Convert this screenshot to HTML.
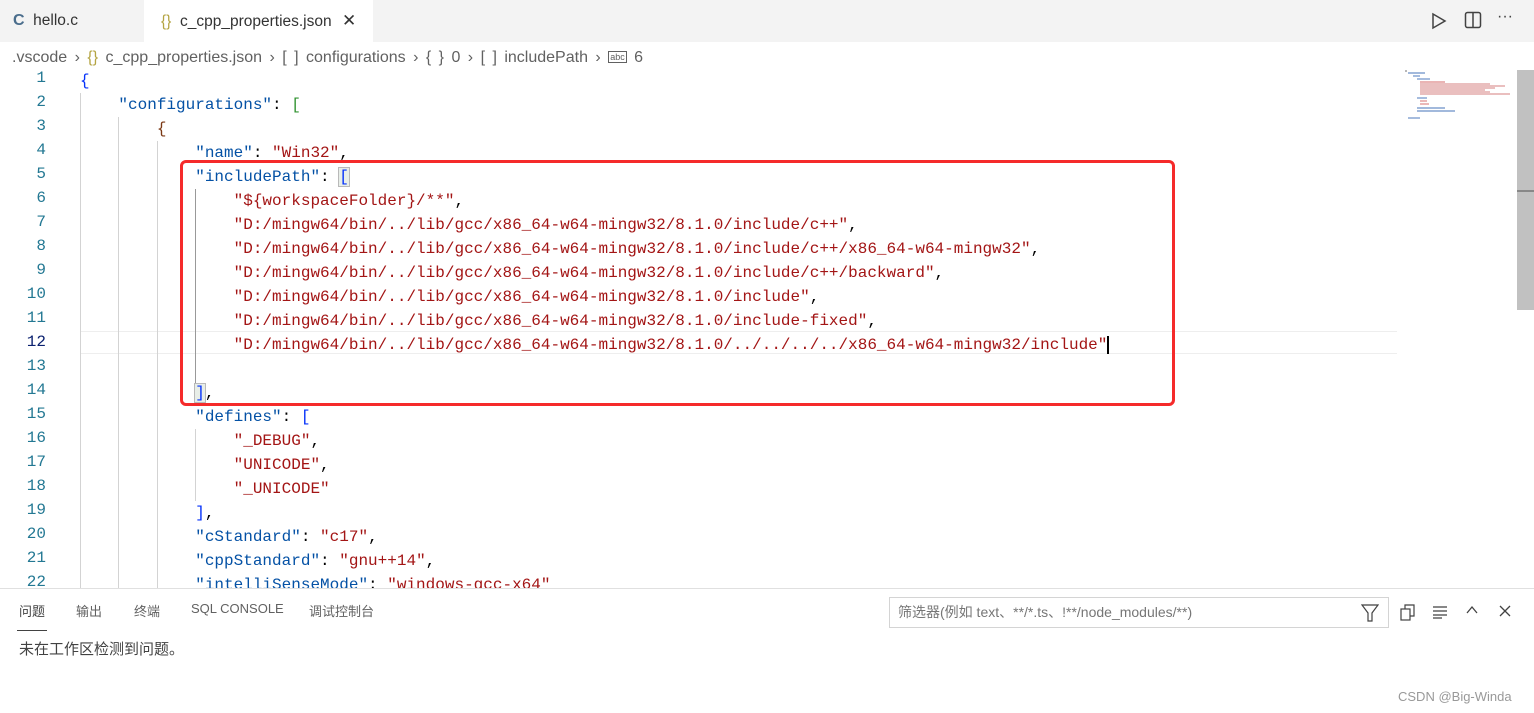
<!DOCTYPE html>
<html><head><meta charset="utf-8"><style>
*{margin:0;padding:0;box-sizing:border-box}
body{width:1534px;height:713px;overflow:hidden;background:#fff;position:relative;font-family:"Liberation Sans","Noto Sans CJK SC",sans-serif;}
.tabs{position:absolute;left:0;top:0;width:1534px;height:42px;background:#f3f3f3}
.tab{position:absolute;top:0;height:42px;font-size:15.5px;color:#333;line-height:42px;white-space:nowrap}
.bc{position:absolute;top:46px;left:12px;font-size:16px;color:#616161;white-space:nowrap;line-height:22px;word-spacing:3px}
.ln{position:absolute;left:0;width:46px;text-align:right;font:16px "Liberation Mono",monospace;color:#237893}
.code{position:absolute;left:80px;font:16px/24px "Liberation Mono",monospace;white-space:pre;color:#000}
.k{color:#0451a5}.s{color:#a31515}.b1{color:#0431fa}.b2{color:#319331}.b3{color:#7b3814}
.guide{position:absolute;width:1px;background:#d3d3d3}
.panel{position:absolute;left:0;top:588px;width:1534px;height:125px;border-top:1px solid #e0e0e0;background:#fff}
.pt{position:absolute;top:12px;font-size:13px;color:#616161}
</style></head><body>
<div class="tabs">
 <div class="tab" style="left:0;width:144px;padding-left:13px"><b style="color:#4a6d8c;font-size:16px">C</b>&nbsp; hello.c</div>
 <div class="tab" style="left:144px;width:229px;background:#fff;padding-left:17px"><span style="color:#b4a442">{}</span>&nbsp; c_cpp_properties.json <span style="font-size:17px;margin-left:6px">✕</span></div>
 <svg style="position:absolute;left:1431px;top:12px" width="16" height="18"><path d="M2 2 L14 9 L2 16 Z" fill="none" stroke="#424242" stroke-width="1.5"/></svg>
 <svg style="position:absolute;left:1464px;top:11px" width="18" height="18"><rect x="1.5" y="1.5" width="15" height="15" rx="2" fill="none" stroke="#424242" stroke-width="1.5"/><line x1="9" y1="2" x2="9" y2="16" stroke="#424242" stroke-width="1.5"/></svg>
 <div style="position:absolute;left:1497px;top:8px;font-size:16px;color:#424242">···</div>
</div>
<div class="bc">.vscode › <span style="color:#b4a442">{}</span> c_cpp_properties.json › [ ] configurations › { } 0 › [ ] includePath › <span style="font-size:9px;border:1px solid #616161;padding:0 1px;vertical-align:2px;word-spacing:0">abc</span> 6</div>

<div style="position:absolute;left:80px;top:331px;width:1317px;height:23px;border-top:1px solid #eee;border-bottom:1px solid #eee"></div>
<div class="guide" style="left:80px;top:93px;height:495px"></div>
<div class="guide" style="left:118px;top:117px;height:471px"></div>
<div class="guide" style="left:157px;top:141px;height:447px"></div>
<div class="guide" style="left:195px;top:189px;height:204px;background:#999"></div>
<div class="guide" style="left:195px;top:429px;height:72px"></div>

<div style="position:absolute;top:69px;left:0">
<div class="ln" style="top:0">1</div><div class="ln" style="top:24px">2</div><div class="ln" style="top:48px">3</div><div class="ln" style="top:72px">4</div><div class="ln" style="top:96px">5</div><div class="ln" style="top:120px">6</div><div class="ln" style="top:144px">7</div><div class="ln" style="top:168px">8</div><div class="ln" style="top:192px">9</div><div class="ln" style="top:216px">10</div><div class="ln" style="top:240px">11</div><div class="ln" style="top:264px;color:#0b216f">12</div><div class="ln" style="top:288px">13</div><div class="ln" style="top:312px">14</div><div class="ln" style="top:336px">15</div><div class="ln" style="top:360px">16</div><div class="ln" style="top:384px">17</div><div class="ln" style="top:408px">18</div><div class="ln" style="top:432px">19</div><div class="ln" style="top:456px">20</div><div class="ln" style="top:480px">21</div><div class="ln" style="top:504px">22</div>
</div>
<div class="code" style="top:69px;height:519px;overflow:hidden"><span class="b1">{</span>
    <span class="k">"configurations"</span>: <span class="b2">[</span>
        <span class="b3">{</span>
            <span class="k">"name"</span>: <span class="s">"Win32"</span>,
            <span class="k">"includePath"</span>: <span class="b1" style="outline:1px solid #b9b9b9;background:#e8eee8">[</span>
                <span class="s">"${workspaceFolder}/**"</span>,
                <span class="s">"D:/mingw64/bin/../lib/gcc/x86_64-w64-mingw32/8.1.0/include/c++"</span>,
                <span class="s">"D:/mingw64/bin/../lib/gcc/x86_64-w64-mingw32/8.1.0/include/c++/x86_64-w64-mingw32"</span>,
                <span class="s">"D:/mingw64/bin/../lib/gcc/x86_64-w64-mingw32/8.1.0/include/c++/backward"</span>,
                <span class="s">"D:/mingw64/bin/../lib/gcc/x86_64-w64-mingw32/8.1.0/include"</span>,
                <span class="s">"D:/mingw64/bin/../lib/gcc/x86_64-w64-mingw32/8.1.0/include-fixed"</span>,
                <span class="s">"D:/mingw64/bin/../lib/gcc/x86_64-w64-mingw32/8.1.0/../../../../x86_64-w64-mingw32/include"</span><span style="border-left:2px solid #000"></span>

            <span class="b1" style="outline:1px solid #b9b9b9;background:#e8eee8">]</span>,
            <span class="k">"defines"</span>: <span class="b1">[</span>
                <span class="s">"_DEBUG"</span>,
                <span class="s">"UNICODE"</span>,
                <span class="s">"_UNICODE"</span>
            <span class="b1">]</span>,
            <span class="k">"cStandard"</span>: <span class="s">"c17"</span>,
            <span class="k">"cppStandard"</span>: <span class="s">"gnu++14"</span>,
            <span class="k">"intelliSenseMode"</span>: <span class="s">"windows-gcc-x64"</span>
</div>
<div style="position:absolute;left:180px;top:160px;width:995px;height:246px;border:3px solid #f52a2a;border-radius:6px"></div>

<svg style="position:absolute;left:1405px;top:70px" width="110" height="52">
<g stroke-width="1.2"><line x1="0" y1="1" x2="2" y2="1" stroke="#888"/><line x1="3" y1="3" x2="20" y2="3" stroke="#6a8fc8"/><line x1="8" y1="6" x2="15" y2="6" stroke="#6a8fc8"/><line x1="12" y1="9" x2="25" y2="9" stroke="#6a8fc8"/><line x1="15" y1="12" x2="40" y2="12" stroke="#d88"/>
<line x1="15" y1="14" x2="85" y2="14" stroke="#d99"/><line x1="15" y1="16" x2="100" y2="16" stroke="#d99"/><line x1="15" y1="18" x2="90" y2="18" stroke="#d99"/><line x1="15" y1="20" x2="80" y2="20" stroke="#d99"/><line x1="15" y1="22" x2="85" y2="22" stroke="#d99"/><line x1="15" y1="24" x2="105" y2="24" stroke="#d99"/>
<line x1="12" y1="28" x2="22" y2="28" stroke="#6a8fc8"/><line x1="15" y1="31" x2="22" y2="31" stroke="#d88"/><line x1="15" y1="34" x2="24" y2="34" stroke="#d88"/><line x1="12" y1="38" x2="40" y2="38" stroke="#6a8fc8"/><line x1="12" y1="41" x2="50" y2="41" stroke="#6a8fc8"/><line x1="3" y1="48" x2="15" y2="48" stroke="#6a8fc8"/></g></svg>
<div style="position:absolute;left:1517px;top:70px;width:17px;height:240px;background:#c1c1c1"></div>
<div style="position:absolute;left:1517px;top:190px;width:17px;height:2px;background:#888"></div>

<div class="panel">
 <div class="pt" style="left:19px;color:#424242">问题</div>
 <div style="position:absolute;left:17px;top:41px;width:30px;height:1px;background:#424242"></div>
 <div class="pt" style="left:76px">输出</div>
 <div class="pt" style="left:134px">终端</div>
 <div class="pt" style="left:191px">SQL CONSOLE</div>
 <div class="pt" style="left:309px">调试控制台</div>
 <div style="position:absolute;left:889px;top:8px;width:500px;height:31px;border:1px solid #d4d4d4;font-size:14px;color:#767676;line-height:29px;padding-left:8px">筛选器(例如 text、**/*.ts、!**/node_modules/**)</div>
 <svg style="position:absolute;left:1361px;top:15px" width="18" height="18"><path d="M1 1 H17 L11 9 V17 H7 V9 Z" fill="none" stroke="#424242" stroke-width="1.2"/></svg>
 <svg style="position:absolute;left:1400px;top:15px" width="16" height="18"><rect x="1" y="5" width="9" height="11" fill="none" stroke="#424242" stroke-width="1.2"/><path d="M5 5 V1 H14 V12 H10" fill="none" stroke="#424242" stroke-width="1.2"/></svg>
 <svg style="position:absolute;left:1432px;top:16px" width="16" height="14"><path d="M1 2H15M1 6H15M1 10H15M1 13H10" stroke="#424242" stroke-width="1.2"/></svg>
 <svg style="position:absolute;left:1465px;top:15px" width="14" height="12"><path d="M2 9 L7 3 L12 9" fill="none" stroke="#424242" stroke-width="1.3"/></svg>
 <svg style="position:absolute;left:1498px;top:15px" width="14" height="14"><path d="M2 2L12 12M12 2L2 12" stroke="#424242" stroke-width="1.3"/></svg>
 <div style="position:absolute;left:19px;top:49px;font-size:15px;color:#424242">未在工作区检测到问题。</div>
 <div style="position:absolute;left:1398px;top:100px;font-size:13px;color:#999">CSDN @Big-Winda</div>
</div>
</body></html>
